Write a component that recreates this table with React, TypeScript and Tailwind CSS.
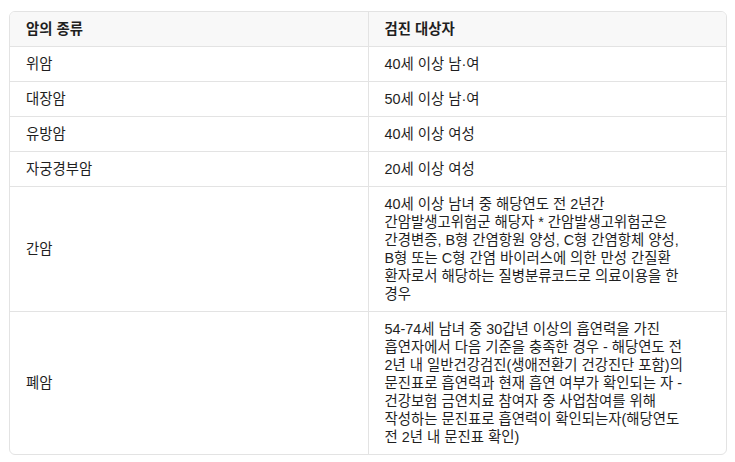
import React from 'react';

const rows: { type: string; target: string[] }[] = [
  { type: '위암', target: ['40세 이상 남·여'] },
  { type: '대장암', target: ['50세 이상 남·여'] },
  { type: '유방암', target: ['40세 이상 여성'] },
  { type: '자궁경부암', target: ['20세 이상 여성'] },
  {
    type: '간암',
    target: [
      '40세 이상 남녀 중 해당연도 전 2년간',
      '간암발생고위험군 해당자 * 간암발생고위험군은',
      '간경변증, B형 간염항원 양성, C형 간염항체 양성,',
      'B형 또는 C형 간염 바이러스에 의한 만성 간질환',
      '환자로서 해당하는 질병분류코드로 의료이용을 한',
      '경우'
    ]
  },
  {
    type: '폐암',
    target: [
      '54-74세 남녀 중 30갑년 이상의 흡연력을 가진',
      '흡연자에서 다음 기준을 충족한 경우 - 해당연도 전',
      '2년 내 일반건강검진(생애전환기 건강진단 포함)의',
      '문진표로 흡연력과 현재 흡연 여부가 확인되는 자 -',
      '건강보험 금연치료 참여자 중 사업참여를 위해',
      '작성하는 문진표로 흡연력이 확인되는자(해당연도',
      '전 2년 내 문진표 확인)'
    ]
  }
];

export default function App() {
  return (
    <div className="min-h-[462px] bg-white pt-[11px] pl-[9px] font-['Liberation_Sans','Noto_Sans_CJK_KR',sans-serif] text-[14.4px] leading-[18px] text-[#1f1f1f]">
      <div className="w-[718px] overflow-hidden rounded-md border border-[#e3e3e3]">
        <table className="w-full table-fixed border-collapse">
          <thead>
            <tr className="bg-[#f8f8f8]">
              <th className="px-4 py-2 text-left font-bold">암의 종류</th>
              <th className="border-l border-[#e3e3e3] px-4 py-2 text-left font-bold">검진 대상자</th>
            </tr>
          </thead>
          <tbody>
            {rows.map((r) => (
              <tr key={r.type} className="border-t border-[#e3e3e3]">
                <td className="px-4 py-2 align-middle">{r.type}</td>
                <td className="border-l border-[#e3e3e3] px-4 py-2 align-top">
                  {r.target.map((line, i) => (
                    <div key={i} className="whitespace-nowrap">{line}</div>
                  ))}
                </td>
              </tr>
            ))}
          </tbody>
        </table>
      </div>
    </div>
  );
}
